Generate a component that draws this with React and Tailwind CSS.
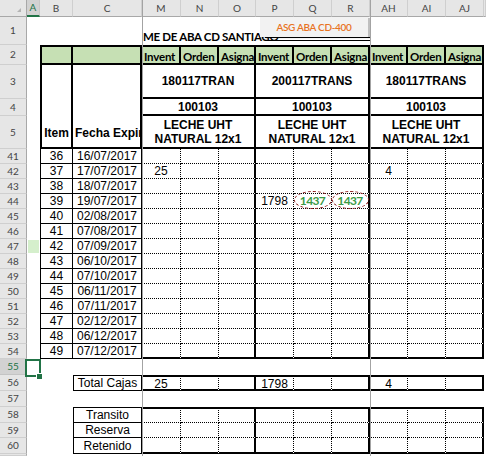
import React from 'react';

const LATO = "font-['Lato',sans-serif]";
const ARIAL = "font-['Liberation_Sans',Arial,sans-serif]";

const colHeads = ['A', 'B', 'C', 'M', 'N', 'O', 'P', 'Q', 'R', 'AH', 'AI', 'AJ', ''];
const subHeads = ['Invent', 'Orden', 'Asigna', 'Invent', 'Orden', 'Asigna', 'Invent', 'Orden', 'Asigna'];
const nine = [0, 1, 2, 3, 4, 5, 6, 7, 8];

const items = [
    [41, 36, '16/07/2017'],
    [42, 37, '17/07/2017'],
    [43, 38, '18/07/2017'],
    [44, 39, '19/07/2017'],
    [45, 40, '02/08/2017'],
    [46, 41, '07/08/2017'],
    [47, 42, '07/09/2017'],
    [48, 43, '06/10/2017'],
    [49, 44, '07/10/2017'],
    [50, 45, '06/11/2017'],
    [51, 46, '07/11/2017'],
    [52, 47, '02/12/2017'],
    [53, 48, '06/12/2017'],
    [54, 49, '07/12/2017'],
];

const values = { 42: { 0: '25', 6: '4' }, 44: { 3: '1798' } };
const ovals = { 44: { 4: '1437', 5: '1437' } };
const totals = { 0: '25', 3: '1798', 6: '4' };

// border sets for the M..AJ blocks (dotted inside, heavy at block edges)
function border(g, kind) {
    const end = g % 3 === 2;
    if (kind === 'top') {
        return end
            ? 'border-r-2 border-r-black border-t-2 border-t-black [border-bottom:1px_dotted_#000]'
            : '[border-right:1px_dotted_#000] border-t-2 border-t-black [border-bottom:1px_dotted_#000]';
    }
    if (kind === 'last') {
        return end ? 'border-r-2 border-b-2 border-black' : '[border-right:1px_dotted_#000] border-b-2 border-b-black';
    }
    if (kind === 'total') {
        return end ? 'border-r-2 border-y-2 border-black' : '[border-right:1px_dotted_#000] border-y-2 border-y-black';
    }
    return end
        ? 'border-r-2 border-r-black [border-bottom:1px_dotted_#000]'
        : '[border-right:1px_dotted_#000] [border-bottom:1px_dotted_#000]';
}

function RowHead({ n, active }) {
    return (
        <div
            className={
                active
                    ? `flex items-center justify-center bg-[#d2d2d2] text-[#217346] text-[10px] border-r border-b border-r-[#a8a8a8] border-b-[#c4c4c4] ${LATO}`
                    : `flex items-center justify-center bg-[#e6e6e6] text-[#444] text-[10px] border-r border-b border-r-[#a8a8a8] border-b-[#cfcfcf] ${LATO}`
            }
        >
            {n}
        </div>
    );
}

function Blanks({ n }) {
    return Array.from({ length: n }, (_, i) => <div key={i} />);
}

export default function App() {
    return (
        <div
            className={`relative w-[486px] h-[456px] overflow-hidden bg-white text-black ${ARIAL} grid grid-cols-[27px_13px_33px_69px_39px_38px_37px_38px_38px_38px_38px_38px_38px_1fr] grid-rows-[17px_28px_20px_34px_17px_33px_repeat(14,15px)_16px_16px_16px_16px_15px_16px_1fr]`}
        >
            {/* column letters */}
            <div className="flex items-end justify-end pr-[5px] pb-[4px] bg-[#e6e6e6] border-r border-b border-r-[#a8a8a8] border-b-[#a8a8a8]">
                <svg width="4" height="4" viewBox="0 0 4 4">
                    <polygon points="4,0 4,4 0,4" fill="#b4b4b4" />
                </svg>
            </div>
            {colHeads.map((c, i) =>
                c === 'A' ? (
                    <div
                        key={i}
                        className={`flex items-center justify-center bg-[#d2d2d2] text-[#217346] text-[10px] border-r border-r-[#c8c8c8] border-b-2 border-b-[#217346] ${LATO}`}
                    >
                        {c}
                    </div>
                ) : (
                    <div
                        key={i}
                        className={`flex items-center justify-center bg-[#e6e6e6] text-[#444] text-[10px] border-r border-b border-r-[#cfcfcf] border-b-[#a8a8a8] ${LATO}`}
                    >
                        {c}
                    </div>
                )
            )}

            {/* row 1 - title */}
            <RowHead n={1} />
            <Blanks n={3} />
            <div className="col-span-10 relative flex items-end pb-[1px]">
                <div className={`w-[123px] shrink-0 whitespace-nowrap pl-[1px] text-[11.5px] font-bold leading-[14px] tracking-[-0.3px] ${LATO}`}>
                    ME DE ABA CD SANTIAGO
                </div>
                <div className="w-[105px] h-[4px] mb-[3px] shrink-0 border-y border-black" />
                <div
                    className={`absolute left-[118px] top-0 w-[108px] h-[20px] flex items-center justify-center bg-[#f2f2f2] shadow-[2px_1px_1px_rgba(0,0,0,0.25)] text-[#e8731f] text-[10px] font-semibold tracking-[-0.3px] ${LATO}`}
                >
                    ASG ABA CD-400
                </div>
            </div>

            {/* row 2 - green sub headers */}
            <RowHead n={2} />
            <div />
            <div className="bg-[#c6e0b4] border-2 border-black" />
            <div className="bg-[#c6e0b4] border-y-2 border-r-2 border-black" />
            {subHeads.map((s, i) => (
                <div
                    key={i}
                    className={`bg-[#c6e0b4] border-y-2 border-r-2 border-black flex items-end pl-[2px] overflow-hidden whitespace-nowrap text-[11.5px] font-bold leading-[13px] tracking-[-0.2px] ${LATO}`}
                >
                    {s}
                </div>
            ))}
            <div />

            {/* rows 3-5 */}
            <RowHead n={3} />
            <div />
            <div className="row-span-3 border-x-2 border-b-2 border-black flex items-end justify-center pb-[6px] font-bold text-[12px] leading-[15px]">
                Item
            </div>
            <div className="row-span-3 border-r-2 border-b-2 border-black flex items-end pl-[2px] pb-[6px] font-bold text-[12px] leading-[15px] overflow-hidden whitespace-nowrap">
                Fecha Expir
            </div>
            {['180117TRAN', '200117TRANS', '180117TRANS'].map((t) => (
                <div key={t} className="col-span-3 border-r-2 border-b-2 border-black flex items-center justify-center font-bold text-[12px]">
                    {t}
                </div>
            ))}
            <div />

            <RowHead n={4} />
            <div />
            {[0, 1, 2].map((k) => (
                <div key={k} className="col-span-3 border-r-2 border-b-2 border-black flex items-center justify-center font-bold text-[12px]">
                    100103
                </div>
            ))}
            <div />

            <RowHead n={5} />
            <div />
            {[0, 1, 2].map((k) => (
                <div
                    key={k}
                    className="col-span-3 border-r-2 border-b-2 border-black flex flex-col items-center justify-center font-bold text-[12px] leading-[14px]"
                >
                    <span>LECHE UHT</span>
                    <span>NATURAL 12x1</span>
                </div>
            ))}
            <div />

            {/* rows 41-54 */}
            {items.map(([r, item, date], i) => {
                const kind = i === items.length - 1 ? 'last' : 'mid';
                return (
                    <React.Fragment key={r}>
                        <RowHead n={r} />
                        {r === 47 ? <div className="m-px bg-[#d5efcc]" /> : <div />}
                        <div className="border-x border-b border-black flex items-center justify-center text-[12px]">{item}</div>
                        <div className="border-r border-b border-black flex items-center justify-center text-[12px]">{date}</div>
                        {nine.map((g) => (
                            <div key={g} className={`${border(g, kind)} relative flex items-center justify-center text-[12px]`}>
                                {values[r]?.[g]}
                                {ovals[r]?.[g] ? (
                                    <>
                                        <div className="absolute left-0 -right-px -top-[3px] -bottom-px z-10 rounded-[50%] border border-dashed border-[#8e1f1f]" />
                                        <span className={`relative font-bold text-[#3a9a45] text-[12px] tracking-[-0.6px] ${LATO}`}>
                                            {ovals[r][g]}
                                        </span>
                                    </>
                                ) : null}
                            </div>
                        ))}
                        <div />
                    </React.Fragment>
                );
            })}

            {/* row 55 - selected A55 */}
            <RowHead n={55} active />
            <div className="relative">
                <div className="absolute -left-[2px] top-0 w-[16px] h-[18px] z-10 border-2 border-[#217346]" />
                <div className="absolute left-[10px] top-[15px] w-[5px] h-[5px] z-10 bg-[#217346] outline outline-1 outline-white" />
            </div>
            <Blanks n={12} />

            {/* row 56 - totals */}
            <RowHead n={56} />
            <Blanks n={2} />
            <div className="border border-black flex items-center justify-center text-[12px]">Total Cajas</div>
            {nine.map((g) => (
                <div key={g} className={`${border(g, 'total')} flex items-center justify-center pt-[1px] text-[12px]`}>
                    {totals[g]}
                </div>
            ))}
            <div />

            <RowHead n={57} />
            <Blanks n={13} />

            {/* rows 58-60 */}
            {['Transito', 'Reserva', 'Retenido'].map((label, i) => (
                <React.Fragment key={label}>
                    <RowHead n={58 + i} />
                    <Blanks n={2} />
                    <div
                        className={
                            i === 0
                                ? 'border border-black flex items-center justify-center text-[12px]'
                                : 'border-x border-b border-black flex items-center justify-center text-[12px]'
                        }
                    >
                        {label}
                    </div>
                    {nine.map((g) => (
                        <div key={g} className={border(g, i === 0 ? 'top' : i === 2 ? 'last' : 'mid')} />
                    ))}
                    <div />
                </React.Fragment>
            ))}

            <RowHead n="" />
            <Blanks n={13} />

            {/* frozen pane lines */}
            <div className="absolute left-[142px] top-0 bottom-0 w-px bg-[#a3a3a3]" />
            <div className="absolute left-[370px] top-0 bottom-0 w-px bg-[#a3a3a3]" />
        </div>
    );
}
